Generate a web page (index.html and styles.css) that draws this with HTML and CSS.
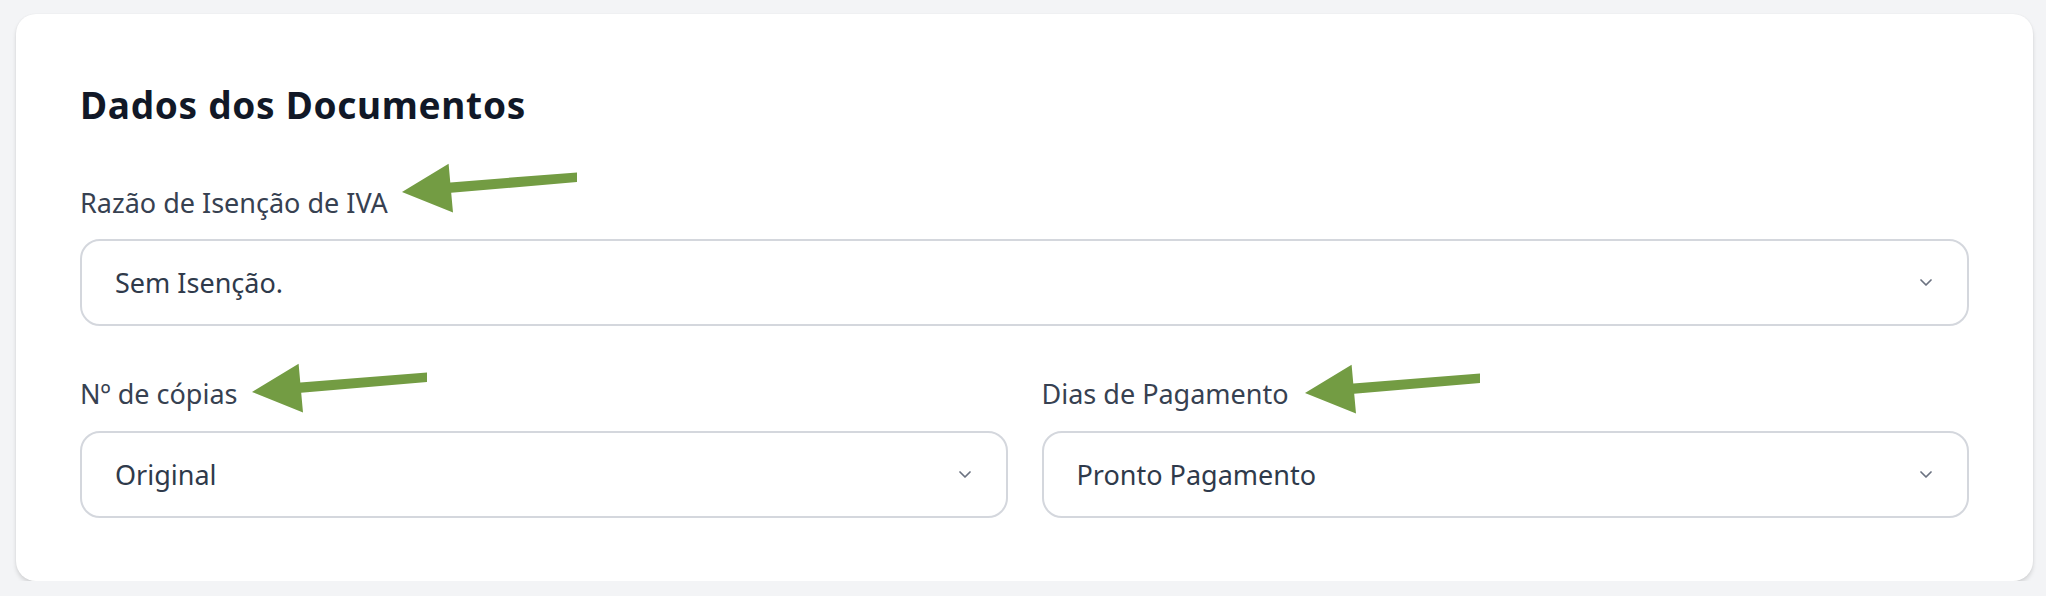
FILE: index.html
```html
<!DOCTYPE html>
<html lang="pt">
<head>
<meta charset="utf-8">
<title>Dados dos Documentos</title>
<link rel="stylesheet" href="styles.css">
</head>
<body>
<section class="card">
  <h2 class="card-title">Dados dos Documentos</h2>

  <div class="field">
    <label class="field-label">Razão de Isenção de IVA</label>
    <div class="select">
      <span class="select-value">Sem Isenção.</span>
      <svg class="chevron" viewBox="0 0 12 7" width="12" height="7"><path d="M1 1l5 5 5-5" fill="none" stroke="#6b7280" stroke-width="1.7" stroke-linecap="round" stroke-linejoin="round"/></svg>
    </div>
  </div>

  <div class="row">
    <div class="field">
      <label class="field-label">Nº de cópias</label>
      <div class="select">
        <span class="select-value">Original</span>
        <svg class="chevron" viewBox="0 0 12 7" width="12" height="7"><path d="M1 1l5 5 5-5" fill="none" stroke="#6b7280" stroke-width="1.7" stroke-linecap="round" stroke-linejoin="round"/></svg>
      </div>
    </div>
    <div class="field">
      <label class="field-label">Dias de Pagamento</label>
      <div class="select">
        <span class="select-value">Pronto Pagamento</span>
        <svg class="chevron" viewBox="0 0 12 7" width="12" height="7"><path d="M1 1l5 5 5-5" fill="none" stroke="#6b7280" stroke-width="1.7" stroke-linecap="round" stroke-linejoin="round"/></svg>
      </div>
    </div>
  </div>

  <svg class="arrow arrow-1" viewBox="-2 -31 180 54" width="180" height="54"><polygon points="0,0 46.6,-28.3 48.3,-9.6 175,-19.6 175,-10 49.2,0.8 51,20.4" fill="#739c43"/></svg>
  <svg class="arrow arrow-2" viewBox="-2 -31 180 54" width="180" height="54"><polygon points="0,0 46.6,-28.3 48.3,-9.6 175,-19.6 175,-10 49.2,0.8 51,20.4" fill="#739c43"/></svg>
  <svg class="arrow arrow-3" viewBox="-2 -31 180 54" width="180" height="54"><polygon points="0,0 46.6,-28.3 48.3,-9.6 175,-19.6 175,-10 49.2,0.8 51,20.4" fill="#739c43"/></svg>
</section>
</body>
</html>
```

FILE: styles.css
```css
html, body {
  margin: 0;
  padding: 0;
  background: #f3f4f6;
}

body {
  font-family: "Noto Sans", "Open Sans", sans-serif;
  padding: 14px 13px 0 16px;
}

.card {
  position: relative;
  background: #ffffff;
  border-radius: 20px;
  box-shadow: 0 3px 4px rgba(0, 0, 0, 0.13), 0 0 2px rgba(0, 0, 0, 0.05);
  padding: 66px 64px 63px 64px;
}

.card-title {
  margin: 0;
  font-size: 37px;
  letter-spacing: 0.7px;
  line-height: 50px;
  font-weight: 700;
  color: #111827;
}

.field {
  display: flex;
  flex-direction: column;
}

.card-title + .field {
  margin-top: 53px;
}

.field-label {
  font-size: 27px;
  line-height: 40px;
  color: #374151;
  margin-bottom: 16px;
}

.row {
  display: grid;
  grid-template-columns: 1fr 1fr;
  column-gap: 34px;
  margin-top: 48px;
}

.row .field-label {
  margin-bottom: 17px;
}

.select {
  box-sizing: border-box;
  height: 87px;
  border: 2px solid #d4d7dd;
  border-radius: 20px;
  display: flex;
  align-items: center;
  justify-content: space-between;
  padding: 0 35px 0 33px;
}

.select-value {
  font-size: 27px;
  line-height: 40px;
  color: #2f3a4b;
}

.chevron {
  display: block;
}

.arrow {
  position: absolute;
  display: block;
}

.arrow-1 { left: 384px; top: 147px; }
.arrow-2 { left: 234px; top: 347px; }
.arrow-3 { left: 1287px; top: 348px; }
```
